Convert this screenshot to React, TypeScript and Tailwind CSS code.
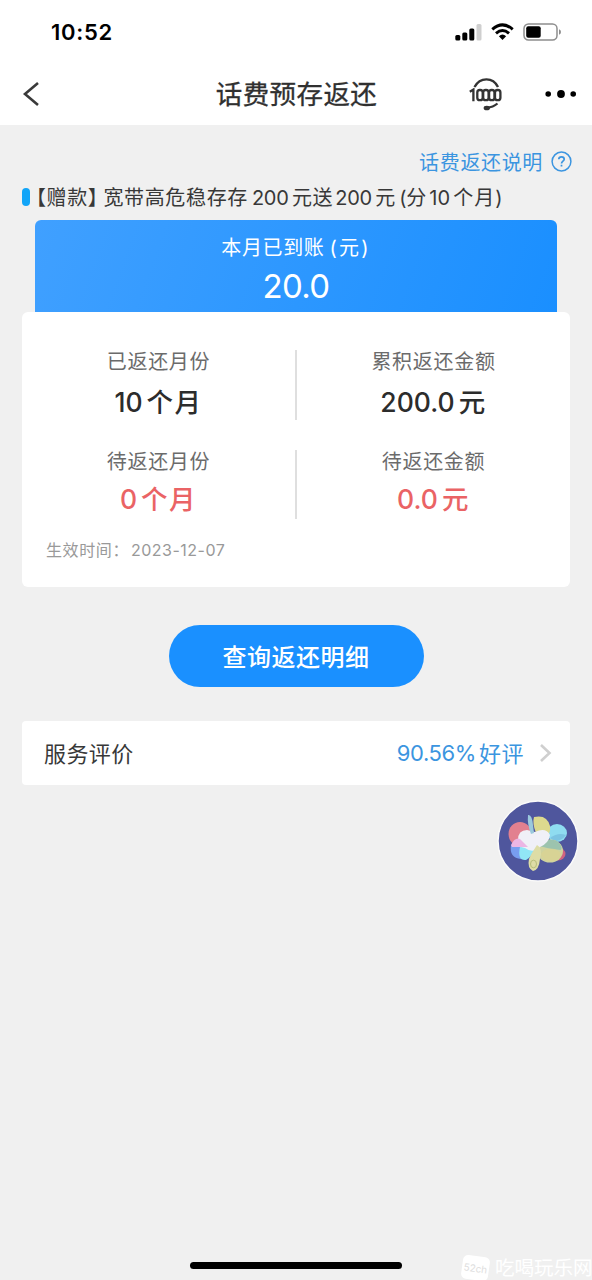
import React from 'react';

function StatusBar() {
  return (
    <div className="flex h-[63px] items-start justify-between pl-[51px] pr-[30px]">
      <span className="mt-[18px] text-[22px] leading-[28px] font-semibold tracking-[0.7px] text-black">10:52</span>
      <div className="mt-[23px] flex items-center">
        <svg width="27" height="18" viewBox="0 0 27 18">
          <rect x="0.3" y="12" width="5" height="5.5" rx="1.5" />
          <rect x="7.3" y="9.5" width="5" height="8" rx="1.5" />
          <rect x="14.3" y="5.5" width="5" height="12" rx="1.5" />
          <rect x="21.5" y="1" width="5" height="16.5" rx="1.5" fill="#cfcfcf" />
        </svg>
        <svg className="ml-[9px]" width="23" height="18" viewBox="0 0 23 18" fill="none" stroke="#000">
          <path d="M1.3 6.3Q11.5-2.5 21.7 6.3" strokeWidth="3" />
          <path d="M5 10.3Q11.5 4.8 18 10.3" strokeWidth="3" />
          <path d="M7.9 13.2Q11.5 10 15.1 13.2L11.5 17Z" fill="#000" stroke="none" />
        </svg>
        <svg className="ml-[9px]" width="39" height="18" viewBox="0 0 39 18">
          <rect x="1" y="1" width="33" height="16" rx="4.5" fill="none" stroke="#8d8d8d" strokeWidth="1.5" />
          <rect x="3.2" y="3.2" width="14.5" height="11.6" rx="2" />
          <path d="M36 6.2Q38 7 38 9T36 11.8Z" fill="#8d8d8d" />
        </svg>
      </div>
    </div>
  );
}

function NavBar() {
  return (
    <div className="flex h-[62px] items-center justify-between pl-[22px] pr-[15px]">
      <svg width="102" height="28" viewBox="0 0 102 28" fill="none" stroke="#3a3a3a" strokeWidth="2.6">
        <path d="M16 3L3 14L16 25" />
      </svg>
      <h1 className="mt-[1px] text-[26.5px] font-normal tracking-[0.4px] whitespace-nowrap text-[#303030] [-webkit-text-stroke:0.3px_#303030]">话费预存返还</h1>
      <div className="flex items-center">
        <svg width="34" height="34" viewBox="0 0 34 34" fill="none" stroke="#333" strokeWidth="2.3">
          <path d="M5.5 10C11-0.2 24-0.2 29 10" strokeWidth="2.4" />
          <path d="M0.8 14.8L4.4 12.6V24.2" />
          <rect x="8.3" y="13" width="5.4" height="10.2" rx="2.5" />
          <rect x="14.2" y="13" width="5.4" height="10.2" rx="2.5" />
          <rect x="20.1" y="13" width="5.4" height="10.2" rx="2.5" />
          <rect x="26" y="13" width="5.4" height="10.2" rx="2.5" />
          <path d="M28.5 26.5Q24 30.3 18 30.8" strokeWidth="2.2" />
          <ellipse cx="17.8" cy="31" rx="3.2" ry="2.3" fill="#333" stroke="none" />
        </svg>
        <svg className="ml-[42px]" width="32" height="10" viewBox="0 0 32 10">
          <circle cx="3.2" cy="5" r="2.8" />
          <circle cx="16" cy="5" r="3.9" />
          <circle cx="28.2" cy="5" r="2.8" />
        </svg>
      </div>
    </div>
  );
}

type StatProps = { label: string; value: string; unit: string; red?: boolean };

function Stat({ label, value, unit, red }: StatProps) {
  return (
    <div className="flex flex-1 flex-col items-center">
      <span className="mt-[-2px] h-[28px] text-[20px] leading-[28px] tracking-[0.7px] text-[#6b6b6b]">{label}</span>
      <div className={`flex h-[38px] items-center gap-[4px] text-[26.5px] leading-[38px] font-medium ${red ? 'mt-[4px] text-[#ea6365]' : 'mt-[7px] text-[#2c2c2c]'}`}>
        <span>{value}</span>
        <span className="tracking-[1.5px]">{unit}</span>
      </div>
    </div>
  );
}

function Pinwheel() {
  return (
    <svg width="82" height="82" viewBox="0 0 82 82">
      <circle cx="41" cy="41" r="40" fill="#4f569d" stroke="#fafafa" strokeWidth="1.5" />
      <ellipse cx="23" cy="34" rx="11.5" ry="12" fill="#e2808f" />
      <path d="M14 45Q12 58 24 59Q33 60 38 47L30 42Z" fill="#789df0" />
      <path d="M23 47Q20 61 29 60Q35 57 40 45Z" fill="#91e6f6" />
      <ellipse cx="61" cy="54" rx="7.5" ry="6.5" fill="#cf6480" />
      <ellipse cx="60" cy="33" rx="10" ry="9" fill="#8fdcf0" />
      <path d="M53 38Q61 32 69 35Q65 41 57 41Z" fill="#7cc4e2" />
      <path d="M37 17Q50 14 53 26Q54 34 48 38L39 33Q35 23 37 17Z" fill="#dcd98e" />
      <ellipse cx="53" cy="51" rx="13" ry="11.5" fill="#cfd3a0" />
      <path d="M42 46Q48 37 60 41Q66 46 64 50Q52 49 42 46Z" fill="#9cc3ae" />
      <ellipse cx="54" cy="55" rx="10" ry="6.5" fill="#ddd48e" opacity="0.6" />
      <path d="M21 40Q21 30 30 30L38 32Q49 27 53 35Q52 43 43 47Q36 54 28 48L20 46Z" fill="#f0f0f7" />
      <path d="M14 45Q18 37 23 39L31 47H15Z" fill="#ecb6e4" />
      <path d="M31 15Q35 14 36 25L37 33L34 34Q30 24 31 15Z" fill="#9bc9dc" />
      <path d="M40 45Q46 48 43 59Q42 70 36 71Q30 68 32 59Q34 54 40 45Z" fill="#dddda6" />
      <ellipse cx="36.5" cy="64" rx="3" ry="3.8" fill="none" stroke="#b6bd79" />
    </svg>
  );
}

export default function App() {
  return (
    <div className="relative flex h-[1280px] w-[592px] flex-col overflow-hidden bg-[#f0f0f0] font-['Inter','Noto_Sans_CJK_SC',sans-serif]">
      <header className="bg-white">
        <StatusBar />
        <NavBar />
      </header>

      <div className="mt-[22px] flex h-[28px] items-center justify-end gap-[8px] pr-[20px] text-[#3b95e0]">
        <span className="mt-[3px] text-[20px] leading-[28px] tracking-[0.65px]">话费返还说明</span>
        <svg width="21" height="21" viewBox="0 0 21 21" fill="none" stroke="currentColor" strokeWidth="1.5">
          <circle cx="10.5" cy="10.5" r="9.4" />
          <path d="M7.8 8.3Q7.8 5.8 10.5 5.8T13.2 8.2C13.2 10 10.5 10.2 10.5 12.4M10.5 13.8V15.5" strokeWidth="1.7" />
        </svg>
      </div>

      <div className="mt-[9px] flex h-[28px] items-center pl-[22px] text-[20px] leading-[28px] whitespace-nowrap text-[#383838]">
        <span className="mt-[-2px] h-[18px] w-[8px] rounded-[4px] bg-[#12a5f8]" />
        <span className="ml-[-4px] tracking-[0.6px]">【赠款】</span>
        <span className="ml-[-5px] tracking-[0.65px]">宽带高危稳存存</span>
        <span className="ml-[4px] w-[37px] tracking-[-0.3px]">200</span>
        <span className="ml-[3px] tracking-[0.65px]">元送</span>
        <span className="ml-[2px] w-[37px] tracking-[-0.3px]">200</span>
        <span className="ml-[3px] w-[24px]">元</span>
        <span className="w-[7px]">(</span>
        <span>分</span>
        <span className="ml-[3px] w-[24px]">10</span>
        <span className="tracking-[1px]">个月</span>
        <span>)</span>
      </div>

      <section className="mx-[35px] mt-[8px] flex h-[92px] flex-col items-center rounded-t-[6px] bg-linear-[110deg] from-[#40a0ff] to-[#1a8fff] text-white">
        <div className="mt-[14px] flex h-[28px] text-[20px] leading-[28px] tracking-[0.65px]">
          <span>本月已到账</span>
          <span className="ml-[5px] tracking-[2.2px]">(元)</span>
        </div>
        <span className="mt-[3px] text-[33px] leading-[42px] tracking-[-0.7px]">20.0</span>
      </section>

      <section className="mx-[22px] h-[275px] rounded-[6px] bg-white">
        <div className="flex h-[138px] pt-[38px]">
          <Stat label="已返还月份" value="10" unit="个月" />
          <div className="h-[70px] w-[2px] bg-[#dfdfdf]" />
          <Stat label="累积返还金额" value="200.0" unit="元" />
        </div>
        <div className="flex h-[87px]">
          <Stat label="待返还月份" value="0" unit="个月" red />
          <div className="h-[69px] w-[2px] bg-[#dfdfdf]" />
          <Stat label="待返还金额" value="0.0" unit="元" red />
        </div>
        <div className="flex h-[24px] items-center pl-[24px] text-[16px] leading-[24px] text-[#999]">
          <span className="mt-[2px] w-[85px] tracking-[0.6px]">生效时间：</span>
          <span className="mt-[1px] tracking-[0.5px]">2023-12-07</span>
        </div>
      </section>

      <button className="mt-[38px] h-[62px] w-[255px] self-center rounded-full bg-[#1a90ff] pt-[3px] text-[24px] font-medium tracking-[0.5px] text-white">查询返还明细</button>

      <section className="mx-[22px] mt-[34px] flex h-[64px] items-center justify-between rounded-[4px] bg-white pr-[18px] pl-[22px]">
        <span className="mt-[3px] text-[22px] tracking-[0.4px] text-[#383838]">服务评价</span>
        <div className="flex items-center text-[22px] text-[#3b95e0]">
          <span className="mt-[1px] tracking-[-0.4px]">90.56%</span>
          <span className="mt-[3px] ml-[3px] tracking-[0.5px]">好评</span>
          <svg className="ml-[15px]" width="13" height="20" viewBox="0 0 13 20" fill="none" stroke="#cfcfcf" strokeWidth="2.6">
            <path d="M2 2L10.5 10L2 18" />
          </svg>
        </div>
      </section>

      <div className="absolute top-[800px] left-[497px]"><Pinwheel /></div>
      <div className="absolute top-[1262px] left-[190px] h-[7px] w-[212px] rounded-full bg-black" />
      <div className="absolute top-[1253px] left-[462px] flex items-center text-white">
        <div className="flex h-[24px] w-[27px] rotate-[8deg] items-center justify-center rounded-[5px] bg-white text-[10px] text-[#dedede]">52ch</div>
        <span className="ml-[6px] text-[19.5px] leading-[30px] whitespace-nowrap">吃喝玩乐网</span>
      </div>
    </div>
  );
}
